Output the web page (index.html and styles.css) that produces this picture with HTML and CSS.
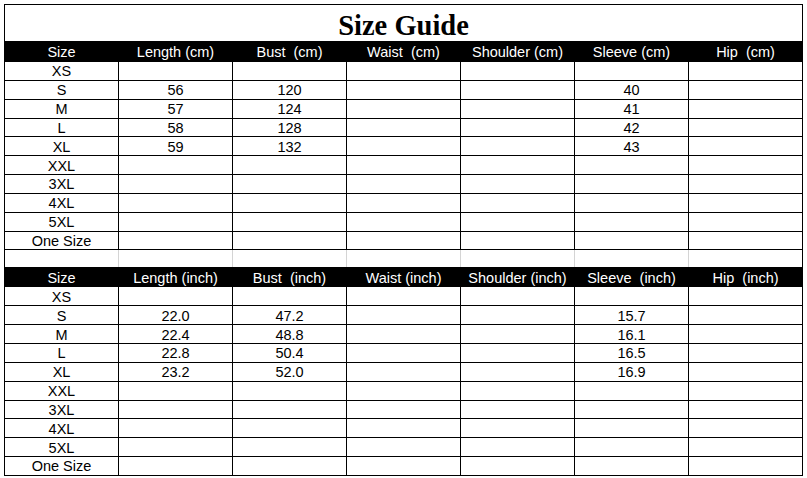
FILE: index.html
```html
<!DOCTYPE html>
<html>
<head>
<meta charset="utf-8">
<title>Size Guide</title>
<link rel="stylesheet" href="styles.css">
</head>
<body>
<table class="guide">
  <colgroup>
    <col class="c"><col class="c"><col class="c"><col class="c"><col class="c"><col class="c"><col class="c">
  </colgroup>
  <tbody>
    <tr class="title-row"><td colspan="7" class="title">Size Guide</td></tr>
    <tr class="head-row head-a"><td>Size</td><td>Length (cm)</td><td>Bust  (cm)</td><td>Waist  (cm)</td><td>Shoulder (cm)</td><td>Sleeve (cm)</td><td>Hip  (cm)</td></tr>
    <tr class="row"><td>XS</td><td></td><td></td><td></td><td></td><td></td><td></td></tr>
    <tr class="row"><td>S</td><td>56</td><td>120</td><td></td><td></td><td>40</td><td></td></tr>
    <tr class="row"><td>M</td><td>57</td><td>124</td><td></td><td></td><td>41</td><td></td></tr>
    <tr class="row"><td>L</td><td>58</td><td>128</td><td></td><td></td><td>42</td><td></td></tr>
    <tr class="row"><td>XL</td><td>59</td><td>132</td><td></td><td></td><td>43</td><td></td></tr>
    <tr class="row"><td>XXL</td><td></td><td></td><td></td><td></td><td></td><td></td></tr>
    <tr class="row"><td>3XL</td><td></td><td></td><td></td><td></td><td></td><td></td></tr>
    <tr class="row"><td>4XL</td><td></td><td></td><td></td><td></td><td></td><td></td></tr>
    <tr class="row"><td>5XL</td><td></td><td></td><td></td><td></td><td></td><td></td></tr>
    <tr class="row"><td>One Size</td><td></td><td></td><td></td><td></td><td></td><td></td></tr>
    <tr class="blank-row"><td></td><td></td><td></td><td></td><td></td><td></td><td></td></tr>
    <tr class="head-row head-b"><td>Size</td><td>Length (inch)</td><td>Bust  (inch)</td><td>Waist (inch)</td><td>Shoulder (inch)</td><td>Sleeve  (inch)</td><td>Hip  (inch)</td></tr>
    <tr class="row"><td>XS</td><td></td><td></td><td></td><td></td><td></td><td></td></tr>
    <tr class="row"><td>S</td><td>22.0</td><td>47.2</td><td></td><td></td><td>15.7</td><td></td></tr>
    <tr class="row"><td>M</td><td>22.4</td><td>48.8</td><td></td><td></td><td>16.1</td><td></td></tr>
    <tr class="row"><td>L</td><td>22.8</td><td>50.4</td><td></td><td></td><td>16.5</td><td></td></tr>
    <tr class="row"><td>XL</td><td>23.2</td><td>52.0</td><td></td><td></td><td>16.9</td><td></td></tr>
    <tr class="row"><td>XXL</td><td></td><td></td><td></td><td></td><td></td><td></td></tr>
    <tr class="row"><td>3XL</td><td></td><td></td><td></td><td></td><td></td><td></td></tr>
    <tr class="row"><td>4XL</td><td></td><td></td><td></td><td></td><td></td><td></td></tr>
    <tr class="row"><td>5XL</td><td></td><td></td><td></td><td></td><td></td><td></td></tr>
    <tr class="row"><td>One Size</td><td></td><td></td><td></td><td></td><td></td><td></td></tr>
  </tbody>
</table>
</body>
</html>
```

FILE: styles.css
```css
html, body {
  margin: 0;
  background: #ffffff;
}

body {
  padding: 4px 0 0 4px;
  font-family: "Liberation Sans", Arial, sans-serif;
  font-size: 14.5px;
  color: #000;
}

.guide {
  border-collapse: collapse;
  table-layout: fixed;
  width: 799px;
}

.guide .c {
  width: 114px;
}

.guide td {
  border: 1px solid #000;
  padding: 1px 0 0 0;
  text-align: center;
  vertical-align: middle;
  white-space: pre;
  line-height: 16px;
  overflow: hidden;
}

.title-row {
  height: 37px;
}

.guide .title {
  font-family: "Liberation Serif", "Times New Roman", serif;
  font-weight: bold;
  font-size: 28.5px;
  line-height: 30px;
  padding-top: 5px;
}

.head-row td {
  background: #000;
  color: #fff;
}

.head-a {
  height: 20px;
}

.head-b {
  height: 19px;
}

.row {
  height: 18.85px;
}

.blank-row {
  height: 18px;
}

.blank-row td {
  border-left-color: #d4d4d4;
  border-right-color: #d4d4d4;
}

.blank-row td:first-child {
  border-left-color: #000;
}

.blank-row td:last-child {
  border-right-color: #000;
}
```
